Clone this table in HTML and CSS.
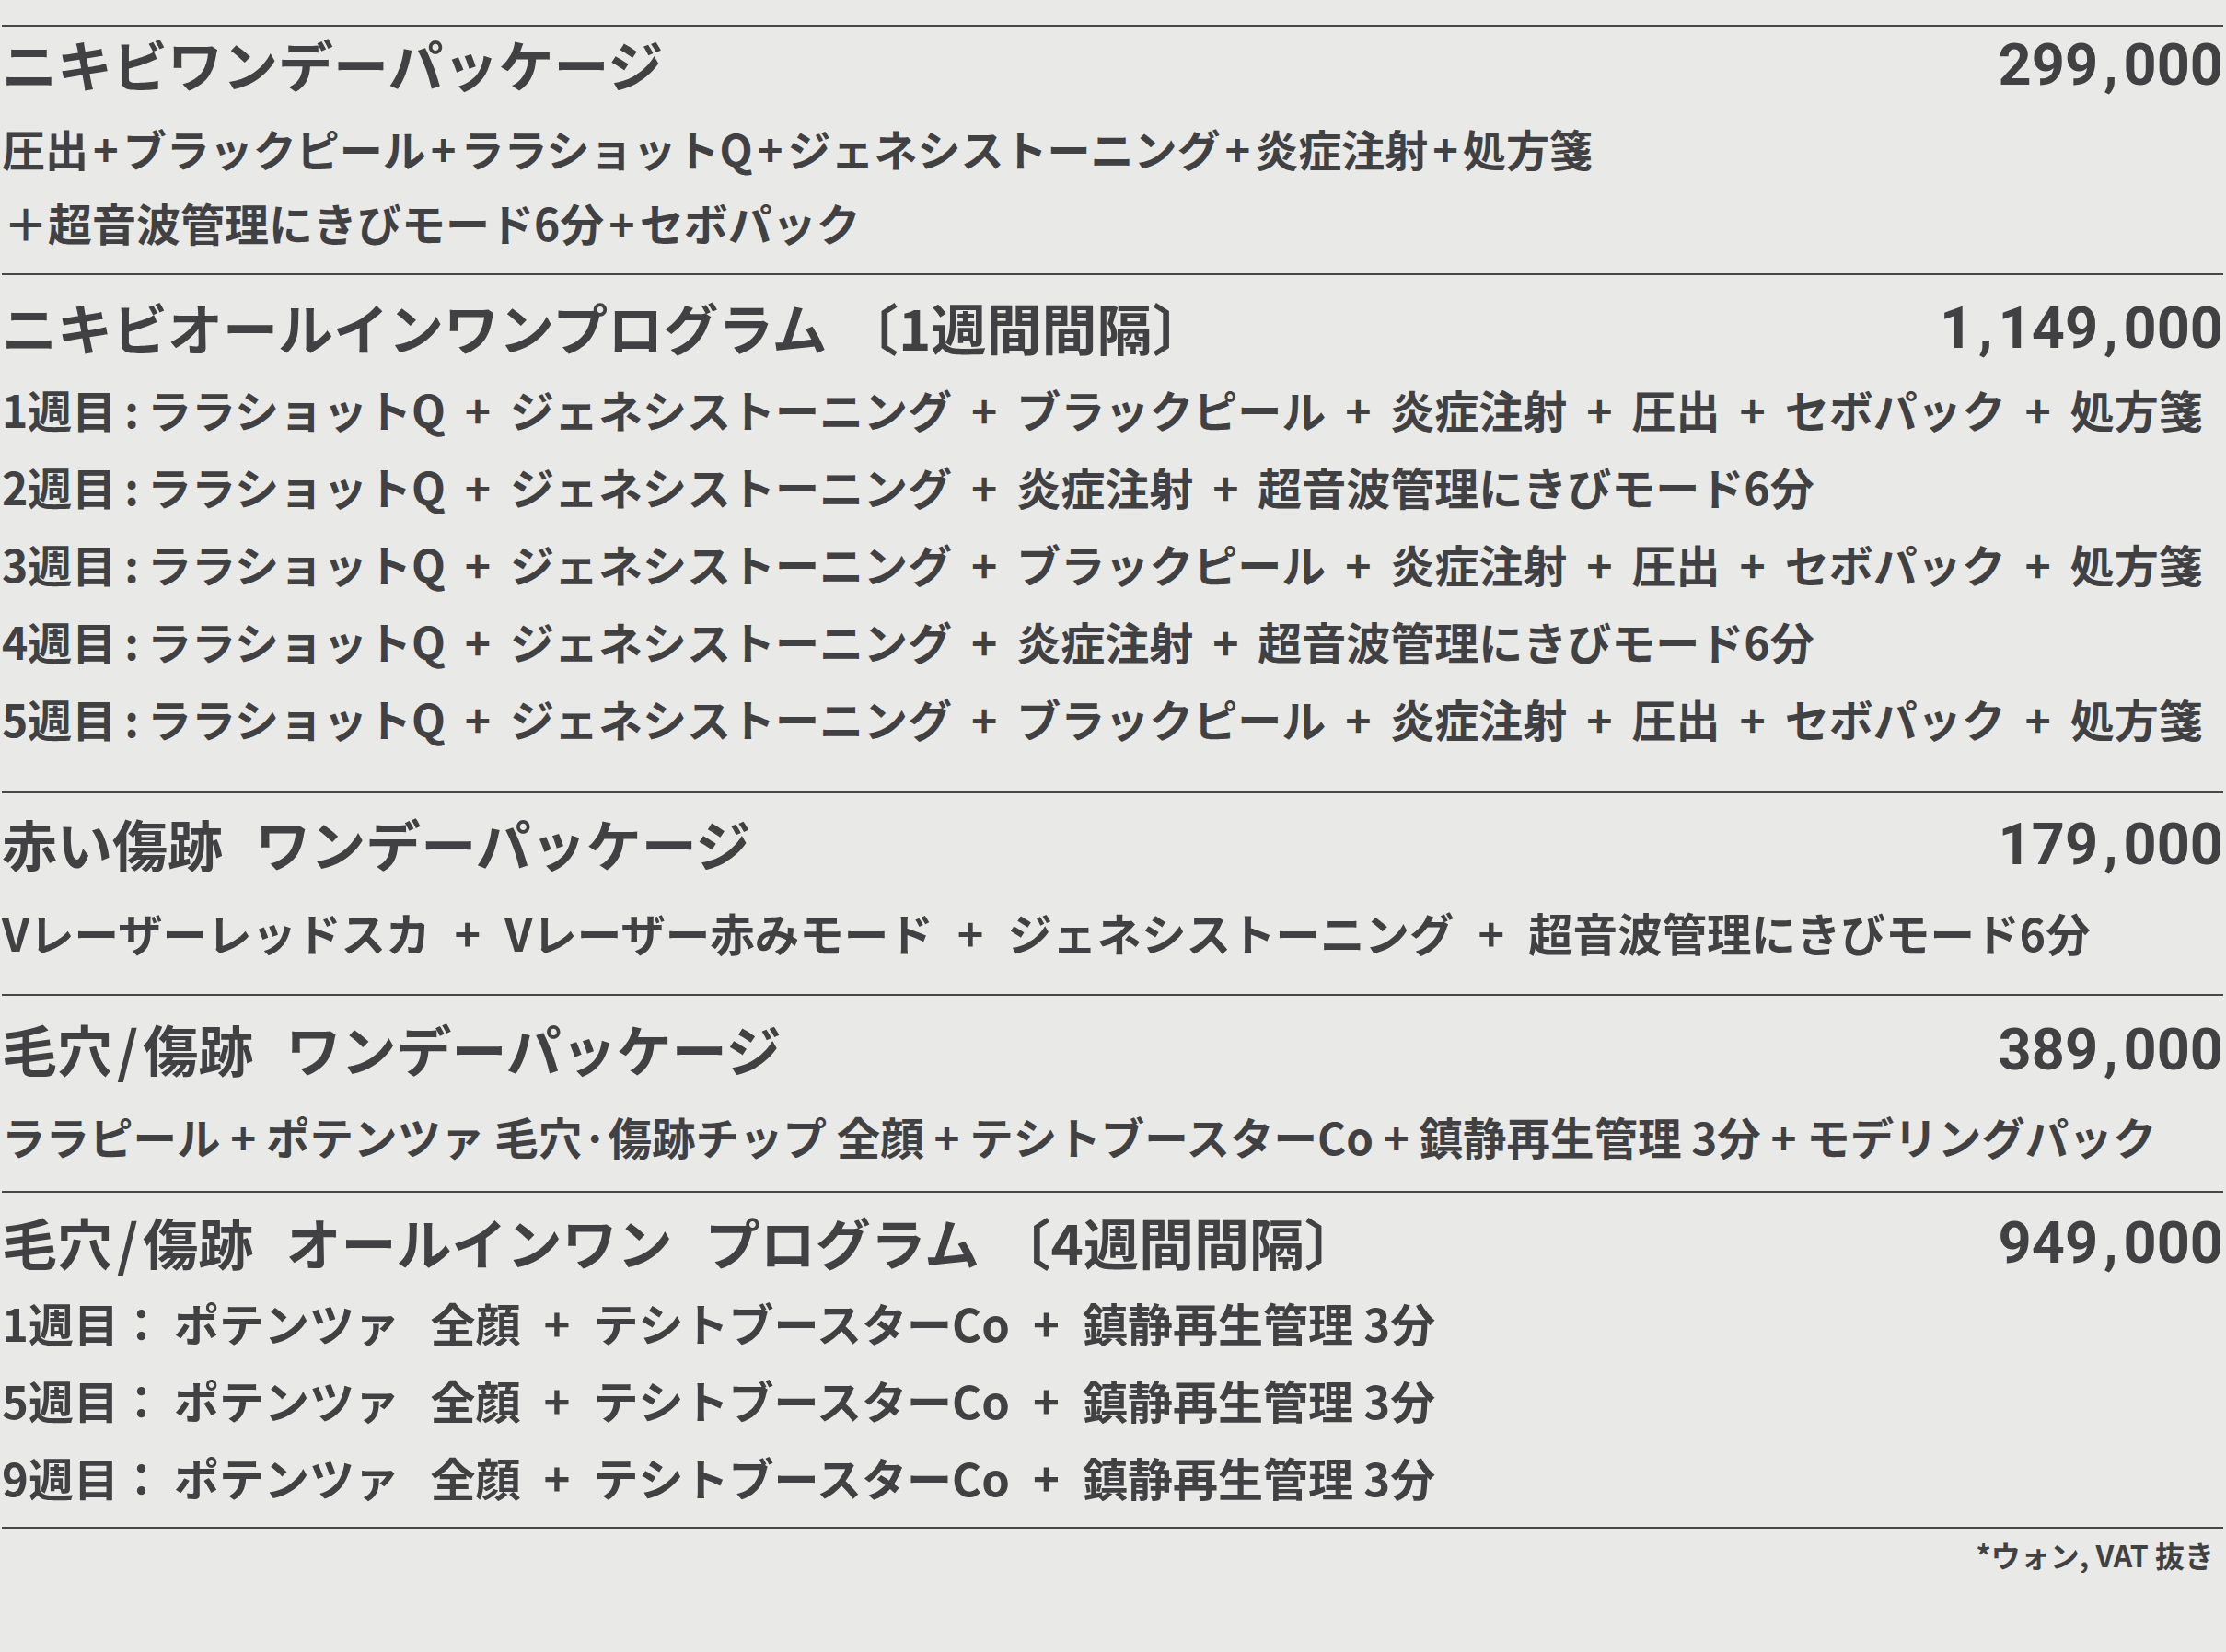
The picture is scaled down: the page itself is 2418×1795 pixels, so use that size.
FILE: index.html
```html
<!DOCTYPE html>
<html lang="ja">
<head>
<meta charset="utf-8">
<title>料金表</title>
<link rel="stylesheet" href="styles.css">
</head>
<body>
<div class="menu">
  <section class="pkg pkg--one">
    <div class="pkg-head">
      <h2 class="pkg-title">ニキビワンデーパッケージ</h2>
      <div class="price">299<span class="cm">,</span>000</div>
    </div>
    <div class="lines lines--tight">
      <p class="line">圧出<span class="pl">+</span>ブラックピール<span class="pl">+</span>ララショットQ<span class="pl">+</span>ジェネシストーニング<span class="pl">+</span>炎症注射<span class="pl">+</span>処方箋</p>
      <p class="line line--cont">＋超音波管理にきびモード6分<span class="pl">+</span>セボパック</p>
    </div>
  </section>

  <section class="pkg pkg--two">
    <div class="pkg-head">
      <h2 class="pkg-title">ニキビオールインワンプログラム 〔1週間間隔〕</h2>
      <div class="price">1<span class="cm">,</span>149<span class="cm">,</span>000</div>
    </div>
    <div class="lines lines--weeks">
      <p class="line">1週目<span class="co">:</span>ララショットQ<span class="sep"> + </span>ジェネシストーニング<span class="sep"> + </span>ブラックピール<span class="sep"> + </span>炎症注射<span class="sep"> + </span>圧出<span class="sep"> + </span>セボパック<span class="sep"> + </span>処方箋</p>
      <p class="line">2週目<span class="co">:</span>ララショットQ<span class="sep"> + </span>ジェネシストーニング<span class="sep"> + </span>炎症注射<span class="sep"> + </span>超音波管理にきびモード6分</p>
      <p class="line">3週目<span class="co">:</span>ララショットQ<span class="sep"> + </span>ジェネシストーニング<span class="sep"> + </span>ブラックピール<span class="sep"> + </span>炎症注射<span class="sep"> + </span>圧出<span class="sep"> + </span>セボパック<span class="sep"> + </span>処方箋</p>
      <p class="line">4週目<span class="co">:</span>ララショットQ<span class="sep"> + </span>ジェネシストーニング<span class="sep"> + </span>炎症注射<span class="sep"> + </span>超音波管理にきびモード6分</p>
      <p class="line">5週目<span class="co">:</span>ララショットQ<span class="sep"> + </span>ジェネシストーニング<span class="sep"> + </span>ブラックピール<span class="sep"> + </span>炎症注射<span class="sep"> + </span>圧出<span class="sep"> + </span>セボパック<span class="sep"> + </span>処方箋</p>
    </div>
  </section>

  <section class="pkg pkg--three">
    <div class="pkg-head">
      <h2 class="pkg-title">赤い傷跡  ワンデーパッケージ</h2>
      <div class="price">179<span class="cm">,</span>000</div>
    </div>
    <div class="lines lines--three">
      <p class="line">Vレーザーレッドスカ<span class="sep"> + </span>Vレーザー赤みモード<span class="sep"> + </span>ジェネシストーニング<span class="sep"> + </span>超音波管理にきびモード6分</p>
    </div>
  </section>

  <section class="pkg pkg--four">
    <div class="pkg-head">
      <h2 class="pkg-title">毛穴<span class="sl">/</span>傷跡  ワンデーパッケージ</h2>
      <div class="price">389<span class="cm">,</span>000</div>
    </div>
    <div class="lines lines--four">
      <p class="line">ララピール + ポテンツァ 毛穴·傷跡チップ 全顔 + テシトブースターCo + 鎮静再生管理 3分 + モデリングパック</p>
    </div>
  </section>

  <section class="pkg pkg--five">
    <div class="pkg-head">
      <h2 class="pkg-title">毛穴<span class="sl">/</span>傷跡  オールインワン  プログラム 〔4週間間隔〕</h2>
      <div class="price">949<span class="cm">,</span>000</div>
    </div>
    <div class="lines lines--weeks2">
      <p class="line">1週目： ポテンツァ   全顔<span class="sep"> + </span>テシトブースターCo<span class="sep"> + </span>鎮静再生管理 3分</p>
      <p class="line">5週目： ポテンツァ   全顔<span class="sep"> + </span>テシトブースターCo<span class="sep"> + </span>鎮静再生管理 3分</p>
      <p class="line">9週目： ポテンツァ   全顔<span class="sep"> + </span>テシトブースターCo<span class="sep"> + </span>鎮静再生管理 3分</p>
    </div>
  </section>

  <p class="note">*ウォン, VAT 抜き</p>
</div>
</body>
</html>
```

FILE: styles.css
```css
html, body {
  margin: 0;
  padding: 0;
  background: #e9e9e7;
}

body {
  color: #414143;
  font-family: "Noto Sans CJK JP", "Noto Sans", sans-serif;
  font-weight: 700;
  padding-top: 27px;
}

.menu {
  margin: 0 3px 0 2px;
}

.pkg {
  border-top: 2px solid #47474a;
}

.pkg--one { padding: 0 0 16px; }
.pkg--two { padding: 16px 0 38px; }
.pkg--three { padding: 14px 0 27px; }
.pkg--four { padding: 17px 0 19px; }
.pkg--five { padding: 13px 0 12px; }

.pkg-head {
  display: flex;
  justify-content: space-between;
  align-items: center;
  height: 80px;
}

.pkg-title {
  margin: 0;
  font-size: 60px;
  font-weight: 700;
  line-height: 80px;
  white-space: pre;
  word-spacing: 4px;
}

.sl {
  margin: 0 5px;
}

.price {
  font-family: Roboto, "Noto Sans", sans-serif;
  font-weight: 700;
  font-size: 63px;
  line-height: 80px;
  padding-top: 4px;
}

.cm {
  margin: 0 6px;
}

.lines {
  display: flex;
  flex-direction: column;
}

.lines--tight { margin-top: 12px; }
.lines--weeks { margin-top: 7px; }
.lines--three { margin-top: 17px; }
.lines--four { margin-top: 16px; }
.lines--weeks2 { margin-top: 6px; }

.line {
  margin: 0;
  font-size: 47px;
  line-height: 80px;
  white-space: pre;
}

.line--cont {
  font-size: 48px;
  padding-left: 2px;
}

.lines--weeks .line {
  font-size: 48px;
  line-height: 84px;
}

.lines--weeks2 .line {
  font-size: 49px;
  line-height: 84px;
}

.lines--three .line {
  font-size: 48.5px;
}

.lines--four .line {
  font-size: 47.5px;
}

.pl {
  margin: 0 5px;
}

.co {
  margin: 0 9px;
}

.sep {
  margin: 0 10px;
}

.lines--three .sep {
  margin: 0 15px;
}

.lines--weeks2 .sep {
  margin: 0 14px;
}

.note {
  margin: 0;
  border-top: 2px solid #47474a;
  padding-top: 8px;
  padding-right: 10px;
  text-align: right;
  font-size: 32px;
  line-height: 40px;
}
```
